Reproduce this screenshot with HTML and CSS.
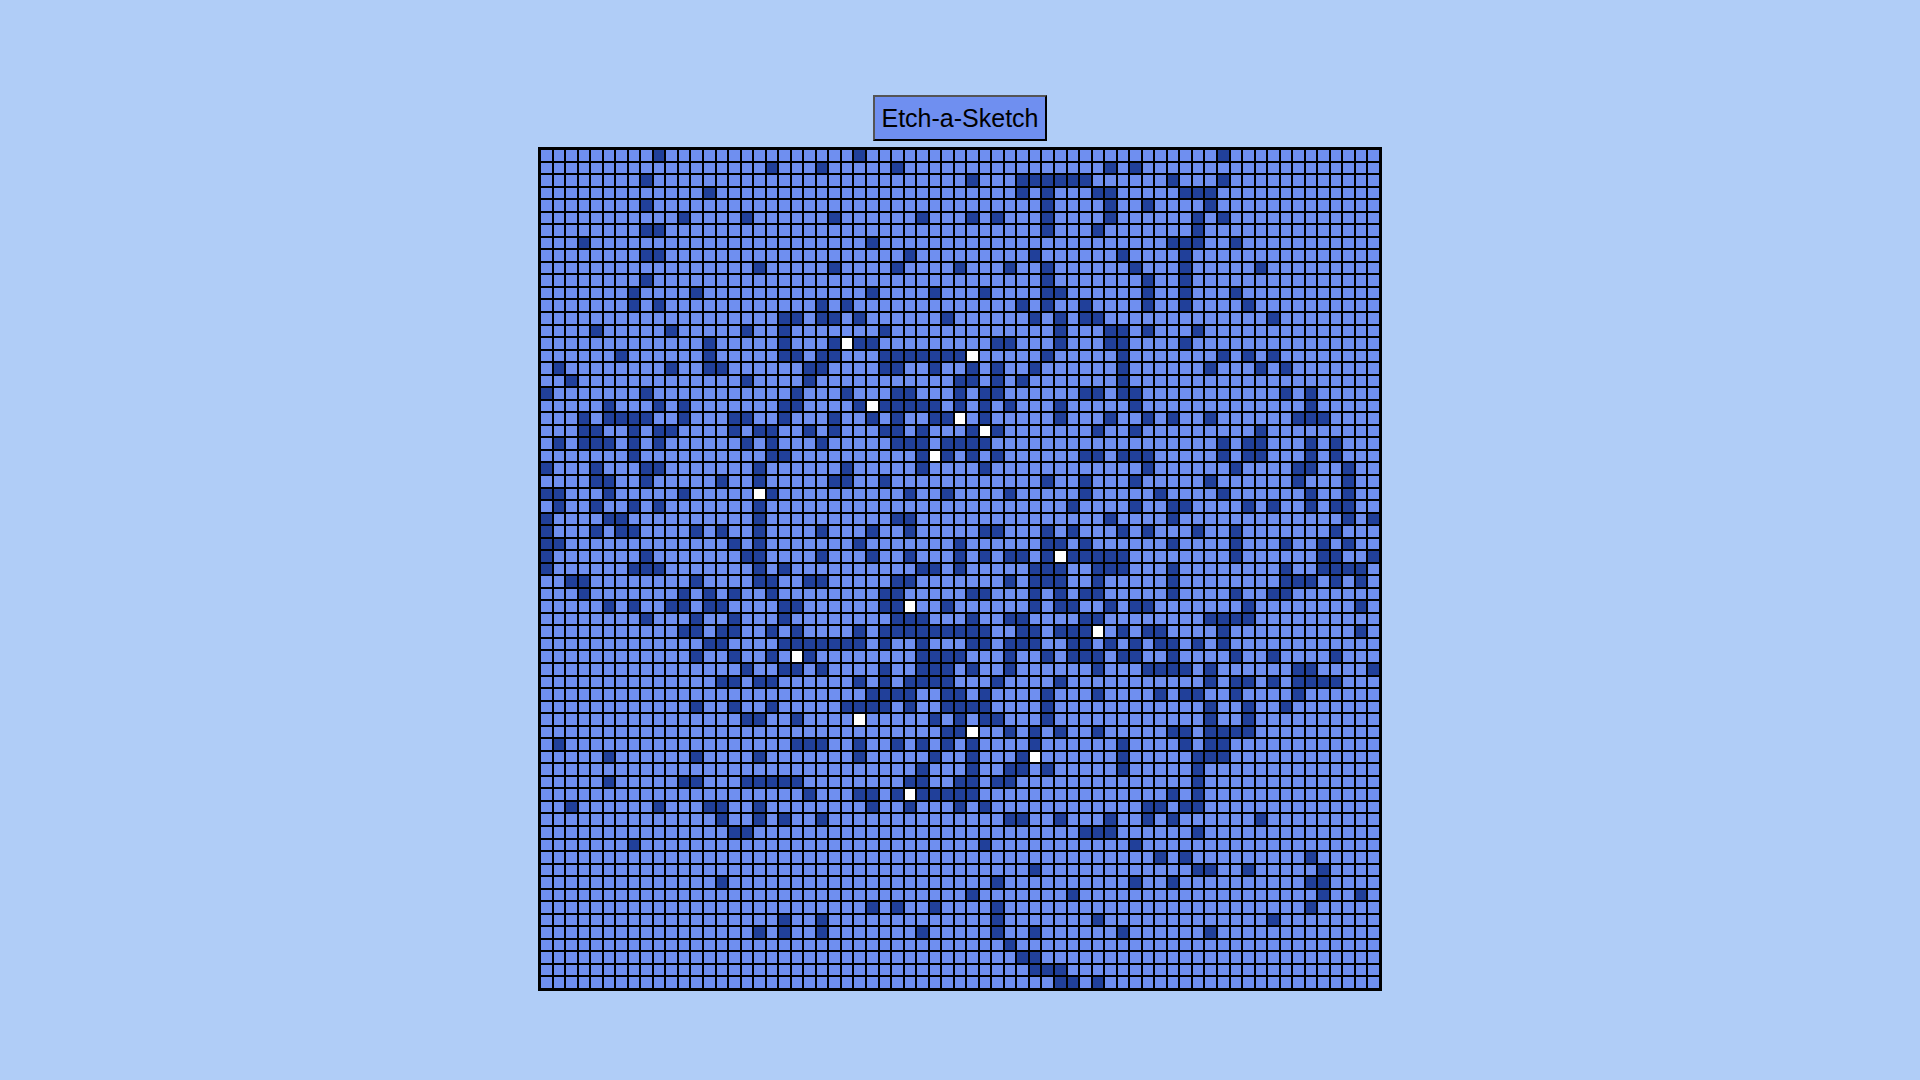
FILE: index.html

```html
<!DOCTYPE html>
<html lang="en">
<head>
  <meta charset="UTF-8">
  <meta name="viewport" content="width=device-width, initial-scale=1.0">
  <title>Etch-a-Sketch</title>
  <link rel="stylesheet" href="styles.css">
</head>
<body>
  <div id="container">
    <button id="title-btn">Etch-a-Sketch</button>
    <div id="grid"></div>
  </div>
  <script src="script.js"></script>
</body>
</html>
```

FILE: styles.css

```css
body {
  margin: 0;
  height: 100vh;
  background-color: #b0cdf7;
  font-family: "Liberation Sans", Arial, sans-serif;
}
#container {
  display: flex;
  flex-direction: column;
  align-items: center;
  gap: 6px;
  padding-top: 95px;
}
#title-btn {
  height: 46px;
  width: 174px;
  padding: 0;
  border: 2px outset black;
  background-color: #6f8ff0;
  color: #000;
  font-family: inherit;
  font-size: 25px;
}
#grid {
  display: grid;
  grid-template-columns: repeat(67, 1fr);
  grid-template-rows: repeat(67, 1fr);
  width: 840px;
  height: 840px;
  border: 2px solid #000;
}
.cell {
  box-sizing: border-box;
  border: 1px solid #000;
  background-color: #6f8ff0;
}
.cell.dark {
  background-color: #21409a;
}
.cell.white {
  background-color: #fff;
}
```

FILE: script.js

```js
const SIZE = 67;
const grid = document.getElementById('grid');

// dark squares per row, by column
const darkCells = [
  [9,25,54],
  [18,22,28,45,47],
  [8,34,38,39,40,41,42,43,50,54],
  [13,38,40,44,45,51,52,53],
  [8,40,45,48,53],
  [11,16,23,30,34,36,40,45,52,54],
  [8,9,40,44,52],
  [3,26,50,51,52,55],
  [8,9,29,39,46,51],
  [17,23,28,33,37,40,47,51,57],
  [8,40,48,51],
  [7,12,26,31,35,40,41,48,51,55],
  [7,9,22,24,38,40,43,48,51,56],
  [19,20,22,23,25,32,39,41,43,44,58],
  [4,10,16,19,27,41,45,46,48,52],
  [13,19,23,25,26,36,37,41,45,46,51],
  [6,13,19,20,22,23,27,28,29,30,31,32,33,40,46,54,56,58],
  [1,10,13,14,21,22,27,28,31,34,36,39,46,53,57,59],
  [2,16,21,33,34,36,38,46],
  [0,8,20,24,28,29,33,35,36,43,44,46,47,59,61],
  [5,9,11,19,20,25,27,28,29,30,31,33,35,37,41,47,61],
  [3,5,6,7,8,11,15,16,19,23,26,28,31,32,35,41,45,48,50,53,60,61,62],
  [3,4,7,9,10,15,17,18,21,23,27,28,30,34,36,44,47,57],
  [1,3,4,5,7,9,16,18,22,28,29,30,32,33,34,35,54,56,57,61,63],
  [7,18,19,30,32,34,36,43,44,46,47,48,54,56,57,61,63],
  [0,4,8,9,17,24,30,35,48,55,60,61,64],
  [4,5,8,14,17,23,24,27,40,43,47,53,60,64],
  [0,1,5,11,18,29,32,37,43,49,54,61,64],
  [1,4,7,9,17,42,47,50,51,56,58,61,63,64],
  [0,5,6,17,28,29,45,50,64,66],
  [0,4,6,7,12,14,17,22,26,29,35,36,40,42,46,48,52,55,63],
  [0,1,15,17,25,33,40,41,43,50,55,59,62,64],
  [0,8,16,17,22,26,29,33,35,37,38,40,42,43,44,45,46,55,62,63,66],
  [0,7,8,9,17,19,30,31,33,39,40,41,44,45,46,50,59,62,63,64,65],
  [2,3,12,17,18,21,22,28,29,37,39,40,41,44,50,59,60,61,63,65],
  [3,11,13,15,18,27,28,34,35,39,41,43,44,50,55,58,59],
  [5,7,10,11,13,14,19,20,27,28,32,39,41,42,45,47,48,56,65],
  [8,12,15,19,28,29,30,34,37,38,43,44,53,54,55,56],
  [11,12,14,15,18,20,25,27,28,29,30,31,32,33,34,35,38,39,41,42,43,46,48,49,54,65],
  [13,14,19,20,21,22,23,24,25,27,30,34,35,37,38,39,42,43,45,47,49,50,52,54],
  [12,15,18,21,30,31,32,33,37,40,42,43,44,46,47,50,55,58,63],
  [16,19,20,22,27,30,31,32,34,37,44,48,49,50,51,53,60,61,66],
  [14,15,17,18,25,27,29,30,31,32,36,41,53,55,56,58,60,61,62,63],
  [26,27,28,29,32,33,35,40,44,49,51,52,55,60],
  [12,15,18,24,25,26,27,29,32,33,34,35,40,53,56,59],
  [16,17,20,31,33,35,36,40,53,56],
  [32,33,37,39,41,44,50,51,53,54,55,56],
  [1,20,21,22,25,28,30,32,34,39,46,51,53,54],
  [5,12,17,25,31,34,38,46,52,53,54],
  [30,34,37,38,40,46,52],
  [5,11,12,16,17,18,19,20,29,30,33,34,36,37,52],
  [21,25,26,28,30,31,32,33,34,50,52],
  [2,9,13,14,17,26,29,33,35,48,49,51,52],
  [14,17,19,22,37,38,41,45,48,50,57],
  [15,16,43,44,45,52],
  [7,35,47],
  [49,51,61],
  [39,52,53,56,62],
  [14,36,47,50,61,62],
  [34,42,62,65],
  [26,28,31,36,61],
  [19,22,36,44,58],
  [17,19,22,30,36,39,46,53],
  [37],
  [38,39],
  [39,40,41],
  [41,42,44]
];

// row, column
const whiteCells = [
  [15,24],[16,34],[20,26],[21,33],[22,35],[24,31],[27,17],[32,41],
  [36,29],[38,44],[40,20],[45,25],[46,34],[48,39],[51,29]
];

for (let r = 0; r < SIZE; r++) {
  for (let c = 0; c < SIZE; c++) {
    const cell = document.createElement('div');
    cell.className = 'cell';
    if (darkCells[r].includes(c)) cell.classList.add('dark');
    if (whiteCells.some(w => w[0] === r && w[1] === c)) cell.classList.add('white');
    grid.appendChild(cell);
  }
}
```
